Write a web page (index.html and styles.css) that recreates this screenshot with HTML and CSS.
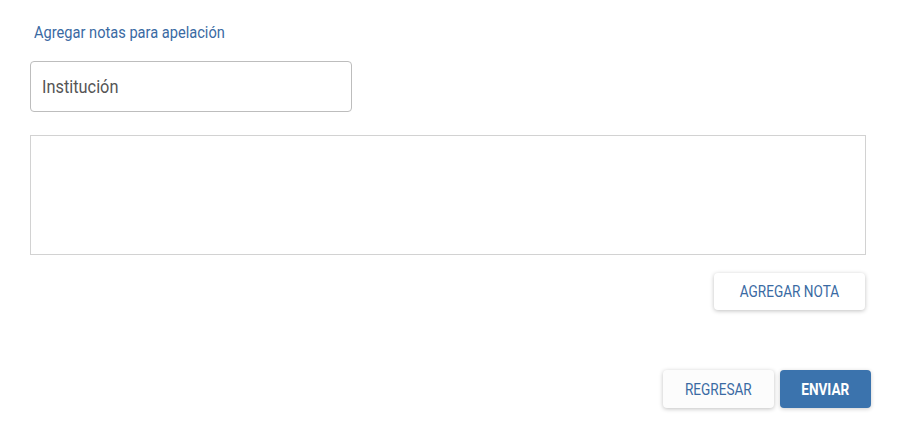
FILE: index.html
```html
<!DOCTYPE html>
<html lang="es">
<head>
<meta charset="utf-8">
<link rel="stylesheet" href="styles.css">
</head>
<body>
<div class="page">
  <h2 class="title"><span class="cond">Agregar notas para apelación</span></h2>
  <div class="field"><span class="cond">Institución</span></div>
  <div class="textarea"></div>
  <div class="row-add">
    <button class="btn btn-light btn-add"><span class="cond-c">AGREGAR NOTA</span></button>
  </div>
  <div class="row-actions">
    <button class="btn btn-light btn-back"><span class="cond-c">REGRESAR</span></button>
    <button class="btn btn-primary btn-send"><span class="cond-c">ENVIAR</span></button>
  </div>
</div>
</body>
</html>
```

FILE: styles.css
```css
html, body {
  margin: 0;
  padding: 0;
  background: #ffffff;
}
body {
  font-family: "Roboto", "Liberation Sans", sans-serif;
  width: 923px;
  height: 432px;
  overflow: hidden;
}
.cond {
  display: inline-block;
  white-space: nowrap;
  transform: scaleX(0.86);
  transform-origin: left center;
}
.cond-c {
  display: inline-block;
  white-space: nowrap;
  transform: scaleX(0.85);
  transform-origin: center center;
}
.page {
  padding: 22px 57px 0 30px;
  display: flex;
  flex-direction: column;
}
.title {
  margin: 0 0 0 4px;
  font-size: 17px;
  font-weight: normal;
  color: #3a6aa3;
  line-height: 20px;
  height: 20px;
}
.field {
  margin-top: 19px;
  width: 320px;
  height: 49px;
  border: 1px solid #bdbdbd;
  border-radius: 4px;
  display: flex;
  align-items: center;
  padding-left: 11px;
  box-sizing: content-box;
  width: 309px;
  font-size: 19px;
  color: #555555;
}
.textarea {
  margin-top: 23px;
  height: 118px;
  border: 1px solid #d2d2d2;
}
.row-add {
  display: flex;
  justify-content: flex-end;
  margin-top: 18px;
  padding-right: 1px;
}
.row-actions {
  display: flex;
  justify-content: flex-end;
  gap: 6px;
  margin-top: 60px;
  margin-right: -5px;
}
.btn {
  font-family: inherit;
  border: none;
  border-radius: 4px;
  font-size: 16px;
  cursor: pointer;
  display: flex;
  align-items: center;
  justify-content: center;
  padding: 0;
}
.btn-light {
  background: #ffffff;
  color: #3a6aa3;
  box-shadow: 0 1px 4px rgba(0, 0, 0, 0.25);
}
.btn-add {
  width: 151px;
  height: 37px;
}
.btn-back {
  background: #fcfcfc;
  width: 111px;
  height: 38px;
}
.btn-primary {
  background: #3b73ad;
  color: #ffffff;
  font-weight: bold;
  width: 91px;
  height: 38px;
  box-shadow: 0 1px 4px rgba(0, 0, 0, 0.2);
}
```
